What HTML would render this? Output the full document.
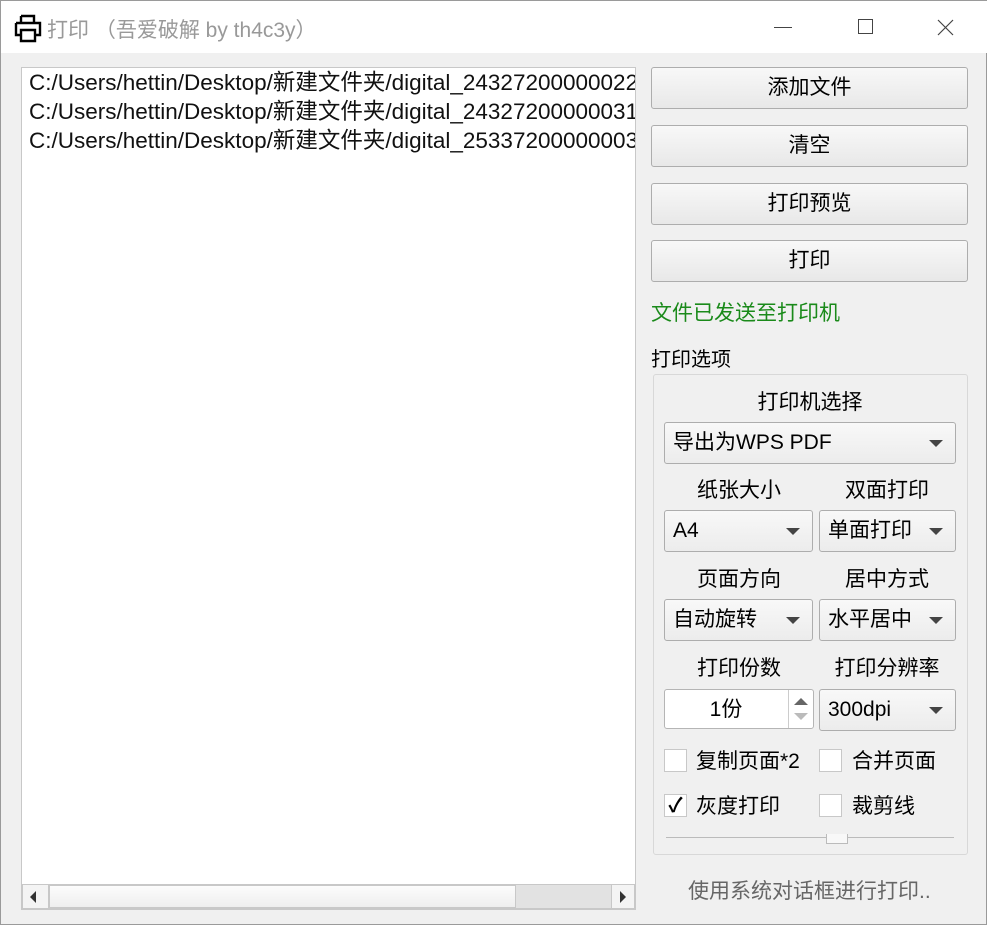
<!DOCTYPE html>
<html><head><meta charset="utf-8"><style>
*{box-sizing:border-box;margin:0;padding:0}
body{width:987px;height:925px;background:#f0f0f0;font-family:"Liberation Sans","Noto Sans CJK SC",sans-serif;font-size:21px;color:#000;position:relative;overflow:hidden;border:1px solid #9a9a9a}
.a{position:absolute}
.title{left:0;top:0;width:987px;height:52px;background:#fff}
.btn{position:absolute;left:650px;width:317px;height:42px;border:1px solid #adadad;border-radius:3px;background:linear-gradient(#f8f8f8,#e8e8e8);text-align:center;line-height:40px}
.cb{position:absolute;height:42px;border:1px solid #adadad;border-radius:3px;background:linear-gradient(#f8f8f8,#ececec);line-height:40px;padding-left:8px}
.cb:after{content:"";position:absolute;right:12px;top:17px;border-left:7px solid transparent;border-right:7px solid transparent;border-top:7px solid #444}
.lbl{position:absolute;text-align:center;width:150px}
.chk{position:absolute;width:23px;height:23px;border:1px solid #c8c8c8;background:#fff}
</style></head><body>
<div class="a title"></div>
<svg class="a" style="left:12px;top:12px" width="30" height="30" viewBox="0 0 30 30"><path d="M8 3h13v7M8 3v7M3 10h24v12h-5M3 10v12h5M8 17h14v11H8z" fill="none" stroke="#000" stroke-width="2.4"/></svg>
<div class="a" style="left:46px;top:13px;color:#999;font-size:21px">打印 （吾爱破解 by th4c3y）</div>
<div class="a" style="left:773px;top:26px;width:18px;height:1px;background:#444"></div>
<div class="a" style="left:857px;top:18px;width:15px;height:15px;border:1px solid #444"></div>
<svg class="a" style="left:936px;top:18px" width="17" height="17"><path d="M1 1L16 16M16 1L1 16" stroke="#444" stroke-width="1.2"/></svg>
<div class="a" style="left:20px;top:66px;width:615px;height:843px;background:#fff;border:1px solid #c8c8c8;overflow:hidden;white-space:nowrap;padding:0 0 0 7px;line-height:29px;color:#111;font-size:22.5px">
C:/Users/hettin/Desktop/新建文件夹/digital_24327200000022<br>C:/Users/hettin/Desktop/新建文件夹/digital_24327200000031<br>C:/Users/hettin/Desktop/新建文件夹/digital_25337200000003</div>
<div class="a" style="left:21px;top:883px;width:613px;height:25px;background:#e2e2e2;border:1px solid #c8c8c8"></div>
<div class="a" style="left:48px;top:884px;width:467px;height:23px;background:linear-gradient(#fcfcfc,#eeeeee);border:1px solid #c8c8c8"></div>
<div class="a" style="left:22px;top:884px;width:26px;height:23px;background:#f4f4f4;border-right:1px solid #c8c8c8"></div>
<div class="a" style="left:29px;top:890px;border-top:6px solid transparent;border-bottom:6px solid transparent;border-right:6px solid #333"></div>
<div class="a" style="left:610px;top:884px;width:23px;height:23px;background:#f4f4f4;border-left:1px solid #c8c8c8"></div>
<div class="a" style="left:619px;top:890px;border-top:6px solid transparent;border-bottom:6px solid transparent;border-left:6px solid #333"></div>
<div class="btn" style="top:66px">添加文件</div>
<div class="btn" style="top:124px">清空</div>
<div class="btn" style="top:182px">打印预览</div>
<div class="btn" style="top:239px">打印</div>
<div class="a" style="left:650px;top:296px;color:#1a8a1a">文件已发送至打印机</div>
<div class="a" style="left:650px;top:342px;font-size:20px">打印选项</div>
<div class="a" style="left:652px;top:373px;width:315px;height:481px;border:1px solid #d8d8d8;border-radius:3px"></div>
<div class="lbl" style="left:734px;top:385px">打印机选择</div>
<div class="cb" style="left:663px;top:421px;width:292px">导出为WPS PDF</div>
<div class="lbl" style="left:663px;top:473px">纸张大小</div>
<div class="lbl" style="left:811px;top:473px">双面打印</div>
<div class="cb" style="left:663px;top:509px;width:149px">A4</div>
<div class="cb" style="left:818px;top:509px;width:137px">单面打印</div>
<div class="lbl" style="left:663px;top:562px">页面方向</div>
<div class="lbl" style="left:811px;top:562px">居中方式</div>
<div class="cb" style="left:663px;top:598px;width:149px">自动旋转</div>
<div class="cb" style="left:818px;top:598px;width:137px">水平居中</div>
<div class="lbl" style="left:663px;top:651px">打印份数</div>
<div class="lbl" style="left:811px;top:651px">打印分辨率</div>
<div class="a" style="left:663px;top:688px;width:150px;height:40px;border:1px solid #b5b5b5;border-radius:3px;background:#fff;text-align:center;line-height:40px;padding-right:26px">1份</div>
<div class="a" style="left:787px;top:689px;width:1px;height:38px;background:#ccc"></div>
<div class="a" style="left:793px;top:697px;border-left:7px solid transparent;border-right:7px solid transparent;border-bottom:7px solid #666"></div>
<div class="a" style="left:793px;top:712px;border-left:7px solid transparent;border-right:7px solid transparent;border-top:7px solid #bbb"></div>
<div class="cb" style="left:818px;top:688px;width:137px">300dpi</div>
<div class="chk" style="left:663px;top:748px"></div>
<div class="a" style="left:695px;top:744px">复制页面*2</div>
<div class="chk" style="left:818px;top:748px"></div>
<div class="a" style="left:851px;top:744px">合并页面</div>
<div class="chk" style="left:663px;top:793px;font-size:20px;line-height:22px;text-align:center;font-weight:bold">✓</div>
<div class="a" style="left:695px;top:789px">灰度打印</div>
<div class="chk" style="left:818px;top:793px"></div>
<div class="a" style="left:851px;top:789px">裁剪线</div>
<div class="a" style="left:665px;top:836px;width:288px;height:1px;background:#bbb"></div>
<div class="a" style="left:825px;top:833px;width:22px;height:10px;border:1px solid #bbb;border-top:none;background:#f8f8f8"></div>
<div class="a" style="left:687px;top:874px;color:#666">使用系统对话框进行打印..</div>
</body></html>
